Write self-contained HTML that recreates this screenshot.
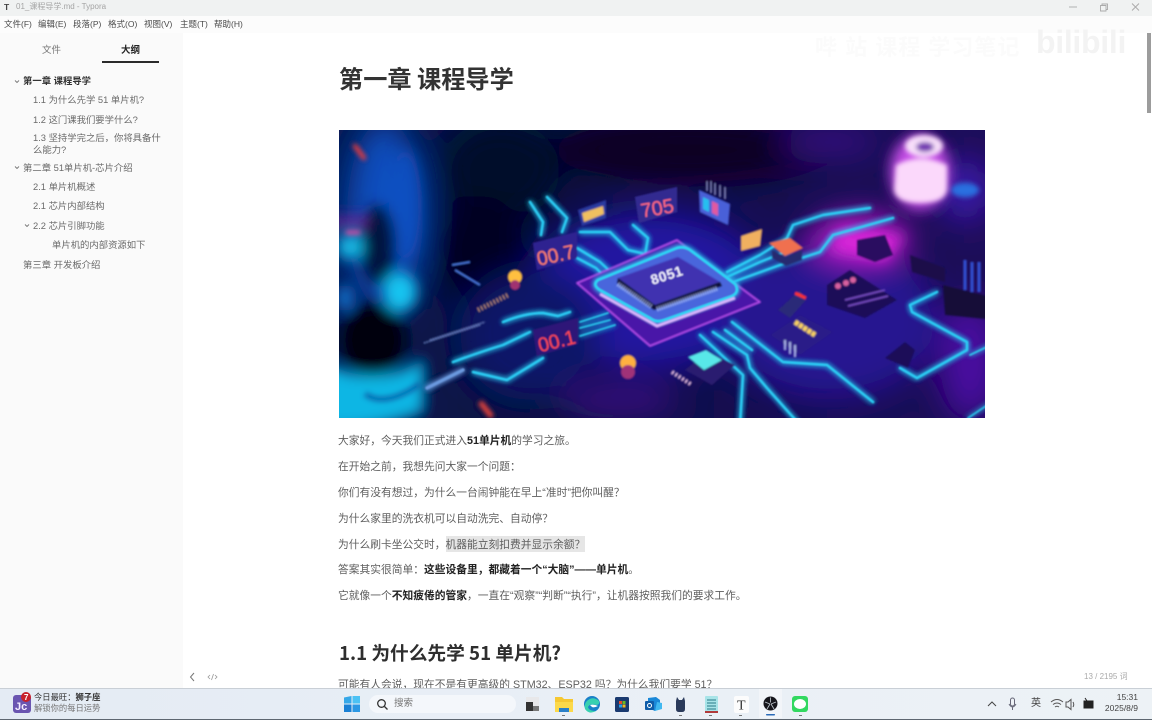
<!DOCTYPE html>
<html lang="zh-CN"><head><meta charset="utf-8"><title>01_课程导学.md - Typora</title>
<style>
html,body{margin:0;padding:0;width:1152px;height:720px;overflow:hidden;background:#fff}
body{position:relative;font-family:"Liberation Sans","Noto Sans CJK SC",sans-serif;color:#555}
.t{position:absolute;white-space:nowrap;line-height:1;filter:blur(.35px)}
.a{position:absolute}
b{color:#222;font-weight:700}
.p{left:338px;font-size:10.75px;color:#5e5e5e}
.s{font-size:9.35px;color:#6a6a6a}
.m{top:20px;font-size:8.5px;color:#4a4a4a}
</style></head><body>

<div class="a" style="left:0;top:0;width:1152px;height:16px;background:#f0f2f2"></div>
<div class="a" style="left:0;top:16px;width:183px;height:672px;background:#fafafa"></div>
<div class="a" style="left:0;top:16px;width:1152px;height:17px;background:#fcfcfc"></div>

<div class="t" style="left:4px;top:3px;font-size:8.5px;font-weight:700;color:#444">T</div>
<div class="t" style="left:16px;top:3px;font-size:8px;color:#a4a4a4">01_课程导学.md - Typora</div>
<svg class="a" style="left:1060px;top:0" width="92" height="16" viewBox="0 0 92 16" fill="none" stroke="#aaa" stroke-width=".9">
<path d="M9 7h8"/><path d="M40.500 5.500h5.500v5.500h-5.500z"/><path d="M42 5.500v-1.500h5.500v5.500h-1.500"/><path d="M72 3.500l7 7M79 3.500l-7 7"/></svg>

<div class="t m" style="left:4px">文件(F)</div>
<div class="t m" style="left:38px">编辑(E)</div>
<div class="t m" style="left:73px">段落(P)</div>
<div class="t m" style="left:108px">格式(O)</div>
<div class="t m" style="left:144px">视图(V)</div>
<div class="t m" style="left:180px">主题(T)</div>
<div class="t m" style="left:214px">帮助(H)</div>

<div class="t" style="left:42px;top:46px;font-size:9.5px;color:#777">文件</div>
<div class="t" style="left:121px;top:46px;font-size:9.5px;color:#222;font-weight:700">大纲</div>
<div class="a" style="left:102px;top:61px;width:57px;height:2px;background:#2a2a2a"></div>

<svg class="a" style="left:0;top:71px" width="40" height="170" fill="none" stroke="#777" stroke-width=".9">
<path d="M15 9.500l2 2 2-2M15 95.500l2 2 2-2M25 153.500l2 2 2-2"/></svg>
<div class="t s" style="left:23px;top:77px;color:#333;font-weight:700">第一章 课程导学</div>
<div class="t s" style="left:33px;top:96px">1.1 为什么先学 51 单片机?</div>
<div class="t s" style="left:33px;top:116px">1.2 这门课我们要学什么?</div>
<div class="t s" style="left:33px;top:134px">1.3 坚持学完之后，你将具备什</div>
<div class="t s" style="left:33px;top:146px">么能力?</div>
<div class="t s" style="left:23px;top:164px">第二章 51单片机-芯片介绍</div>
<div class="t s" style="left:33px;top:183px">2.1 单片机概述</div>
<div class="t s" style="left:33px;top:202px">2.1 芯片内部结构</div>
<div class="t s" style="left:33px;top:222px">2.2 芯片引脚功能</div>
<div class="t s" style="left:52px;top:241px">单片机的内部资源如下</div>
<div class="t s" style="left:23px;top:261px">第三章 开发板介绍</div>

<div class="a" style="left:1147px;top:33px;width:4px;height:80px;background:#9c9c9c"></div>

<div class="t" style="left:815px;top:37px;font-size:22px;letter-spacing:1px;color:#fbfbfb;font-weight:700">哔 站 课程 学习笔记</div>
<div class="t" style="left:1036px;top:26px;font-size:32px;font-weight:700;color:#f3f3f3;letter-spacing:-.3px">bilibili</div>

<div class="t" style="left:339px;top:66px;font-size:24.2px;font-weight:700;color:#333;font-family:'Noto Sans CJK SC',sans-serif">第一章 课程导学</div>

<svg class="a" style="left:339px;top:130px" width="646" height="288" viewBox="339 130 646 288">
<defs>
<linearGradient id="bg" x1="0" x2="1" y1="0" y2="0"><stop offset="0" stop-color="#071a55"/><stop offset=".3" stop-color="#08103f"/><stop offset=".6" stop-color="#120a50"/><stop offset="1" stop-color="#1e0a5a"/></linearGradient>
<filter id="all" x="0" y="0" width="100%" height="100%"><feGaussianBlur stdDeviation=".75"/></filter>
<filter id="b20" x="-60%" y="-60%" width="220%" height="220%"><feGaussianBlur stdDeviation="16"/></filter>
<filter id="b8" x="-60%" y="-60%" width="220%" height="220%"><feGaussianBlur stdDeviation="7"/></filter>
<filter id="b3" x="-50%" y="-50%" width="200%" height="200%"><feGaussianBlur stdDeviation="2.500"/></filter>
<filter id="b1" x="-20%" y="-20%" width="140%" height="140%"><feGaussianBlur stdDeviation=".6"/></filter>
<filter id="gl" x="-20%" y="-20%" width="140%" height="140%"><feGaussianBlur stdDeviation="2.600" result="g"/><feMerge><feMergeNode in="g"/><feMergeNode in="g"/><feMergeNode in="SourceGraphic"/></feMerge></filter>
<clipPath id="c"><rect x="339" y="130" width="646" height="288"/></clipPath>
</defs>
<g clip-path="url(#c)"><g filter="url(#all)">
<rect x="319" y="110" width="686" height="328" fill="url(#bg)"/>
<g filter="url(#b20)">
<ellipse cx="690" cy="150" rx="140" ry="32" fill="#070322"/>
<ellipse cx="500" cy="170" rx="60" ry="50" fill="#060a2a"/>
<ellipse cx="480" cy="250" rx="45" ry="55" fill="#050622"/>
<ellipse cx="650" cy="290" rx="120" ry="80" fill="#2318a0"/>
<ellipse cx="530" cy="335" rx="70" ry="65" fill="#0d1668"/>
<ellipse cx="830" cy="320" rx="110" ry="80" fill="#251390"/>
<ellipse cx="860" cy="238" rx="50" ry="24" fill="#b01cc8"/>
<ellipse cx="970" cy="360" rx="30" ry="60" fill="#4a10a0"/>
<ellipse cx="965" cy="190" rx="28" ry="32" fill="#3a1aa8"/>
<ellipse cx="620" cy="400" rx="60" ry="18" fill="#38107c"/>
<ellipse cx="830" cy="142" rx="50" ry="12" fill="#3c1288"/>
<ellipse cx="385" cy="215" rx="38" ry="95" fill="#0c50c0"/>
</g>
<g filter="url(#b8)">
<ellipse cx="405" cy="205" rx="16" ry="55" fill="#0d52c4" opacity=".8"/>
<ellipse cx="378" cy="245" rx="18" ry="40" fill="#041240"/>
<ellipse cx="373" cy="340" rx="32" ry="36" fill="#01030f"/>
<path d="M320 360Q375 392 424 358L424 412Q380 430 320 430Z" fill="#10b6e4"/>
<ellipse cx="400" cy="292" rx="17" ry="20" fill="#12c4f0"/>
<ellipse cx="350" cy="247" rx="13" ry="12" fill="#12c0e8"/>
<ellipse cx="345" cy="298" rx="7" ry="13" fill="#1280e0"/>
<rect x="330" y="217" width="35" height="10" fill="#8a2098" opacity=".8"/>
<ellipse cx="920" cy="172" rx="30" ry="38" fill="#c850e8"/>
<path d="M840 228L905 235L885 262L830 250Z" fill="#d828d8"/>
</g>
<g filter="url(#b3)">
<path d="M365 394Q385 408 420 384" stroke="#0a4a98" stroke-width="6" fill="none" opacity=".6"/>
<path d="M896 165Q920 152 947 165L947 190Q945 203 920 203Q896 203 894 190Z" fill="#fbd8fb"/>
<ellipse cx="924" cy="146" rx="19" ry="11" fill="#f8e0fa"/>
<ellipse cx="925" cy="147" rx="9" ry="5" fill="#7030b0"/>
<ellipse cx="965" cy="190" rx="14" ry="7" fill="#2a70e0"/>
<path d="M355 146l9 12" stroke="#ff3a30" stroke-width="4" stroke-linecap="round"/>
<path d="M480 402l12 15" stroke="#ff4a3a" stroke-width="5"/>
<rect x="346" y="231" width="14" height="3" fill="#ff40a0"/>
</g>

<g fill="none" stroke="#2ccdf6" stroke-width="2.200" filter="url(#gl)" stroke-linejoin="round" stroke-linecap="round">
<path d="M530 202L543 222L541 235"/><path d="M547 197L567 218L562 232"/>
<path d="M577 248L600 262L615 276"/><path d="M577 258L596 268L610 282"/>
<path d="M580 232L610 232L628 250L650 255"/><path d="M633 225L648 238L645 255"/>
<path d="M453 362Q480 352 503 345L530 332"/><path d="M503 322Q525 313 543 313L558 316L570 312"/>
<path d="M580 322L608 313M580 328L610 320M580 336L615 325" stroke-width="1.300"/>
<path d="M473 372L507 380L543 358"/><path d="M427 388L463 370" stroke="#6a9ae0" stroke-width="3"/>
<path d="M727 272L760 255L787 238L793 225L823 215L870 208"/>
<path d="M733 282L780 265L820 252L833 235L893 218"/>
<path d="M725 278L760 262L790 250"/>
<path d="M732 322L783 362L827 365L873 402"/>
<path d="M713 332L747 355L750 368L767 388L800 425"/>
<path d="M700 335L743 375L740 425"/>
<path d="M725 330L752 350"/>
<path d="M910 305L937 292M910 305L912 312L967 342L967 350L917 378L900 368"/>
<path d="M970 355L995 343M968 418L995 400" stroke-width="1.300"/>
</g>

<!-- chip -->
<path d="M577 283L677 240L760 302L650 346Z" fill="#4a14a8" stroke="#c050f0" stroke-width="1.500" filter="url(#b1)" stroke-linejoin="round"/>
<path d="M598 280L677 248Q684 246 690 250L735 284Q740 292 732 296L664 320Q656 323 650 318L600 290Q592 285 598 280Z" fill="#4a66dc" stroke="#2cd6f6" stroke-width="2.500" filter="url(#gl)"/>
<path d="M600 294L650 322L657 326L735 298" fill="none" stroke="#e0b8ff" stroke-width="3" filter="url(#b1)"/>
<path d="M618 278L678 257L720 282L655 305Z" fill="#4030b0" filter="url(#b1)"/>
<path d="M618 278L655 305L720 282L722 286L654 310L617 283Z" fill="#0c0c38" filter="url(#b1)"/>
<path d="M618 284L652 307M657 309L718 288" stroke="#c0d4ff" stroke-width="5" stroke-dasharray="1 1.300" fill="none" filter="url(#b1)"/>
<text x="667" y="280" text-anchor="middle" transform="rotate(-18 667 276)" font-family="Liberation Sans" font-weight="700" font-size="14" fill="#f2f0ff" letter-spacing=".5">8051</text>

<!-- displays -->
<path d="M533 243L577 232L577 258L537 270Z" fill="#2f2390"/>
<text x="555" y="262" text-anchor="middle" transform="rotate(-12 555 252)" font-family="Liberation Sans" font-size="20" fill="#ff8068" textLength="38" lengthAdjust="spacingAndGlyphs">00.7</text>
<path d="M533 330L578 318L578 344L537 356Z" fill="#2e1878"/>
<text x="556" y="348" text-anchor="middle" transform="rotate(-14 556 338)" font-family="Liberation Sans" font-size="20" fill="#ff4a50" textLength="38" lengthAdjust="spacingAndGlyphs">00.1</text>
<path d="M635 197L677 187L677 212L639 223Z" fill="#332a90"/>
<text x="657" y="215" text-anchor="middle" transform="rotate(-10 657 207)" font-family="Liberation Sans" font-size="20" fill="#ff6a80">705</text>
<g filter="url(#b1)">
<path d="M578 210L606 200L606 218L582 226Z" fill="#2b3aa0"/>
<path d="M582 213L603 206L604 214L584 222Z" fill="#f0c060"/>
<path d="M699 190L730 204L728 225L700 212Z" fill="#4a60d8"/>
<path d="M703 197L709 200L709 212L703 209Z" fill="#28c0f0"/>
<path d="M712 201L718 204L718 216L712 213Z" fill="#e05aa0"/>
<path d="M707 181v10M711 181v12M715 183v12M720 185v12M725 187v12" stroke="#b8c0f0" stroke-width="1"/>
<path d="M741 236L762 229L760 246L741 251Z" fill="#f0b060"/>
<path d="M769 243L790 238L803 248L785 256Z" fill="#f07050"/>
<path d="M772 250L786 257L802 250L802 260L786 266L772 258Z" fill="#252a70"/>
<circle cx="515" cy="277" r="7" fill="#ffc040"/><circle cx="515" cy="285" r="5" fill="#a03070"/>
<circle cx="628" cy="363" r="8" fill="#ffb040"/><circle cx="628" cy="372" r="7" fill="#a03078"/>
<path d="M478 310L508 295" stroke="#c89070" stroke-width="5" stroke-dasharray="1.500 2" fill="none"/>
<path d="M455 270L480 285M452 265L470 262" stroke="#4a7ae0" stroke-width="2" fill="none"/>
<path d="M424 343L480 325M430 340L485 322" stroke="#7a90d0" stroke-width="1.500" stroke-dasharray="1.500 1" fill="none"/>
<path d="M685 370L708 352L735 365L712 385Z" fill="#2a1a70"/>
<path d="M688 357L706 350L722 360L704 370Z" fill="#58e8e8"/>
<path d="M672 372L692 385" stroke="#e8c0e0" stroke-width="4" stroke-dasharray="2 2"/>
<path d="M770 335L800 315L833 332L800 355Z" fill="#2a1c88"/>
<path d="M795 322L815 335" stroke="#f8d060" stroke-width="5" stroke-dasharray="4 1"/>
<path d="M785 340v10M790 342v12M795 345v12" stroke="#a8b0e8" stroke-width="2"/>
<path d="M778 310L800 290L806 300L790 318Z" fill="#2c2a78"/><path d="M795 293L806 298" stroke="#ff3030" stroke-width="3"/>
<path d="M827 285L850 270L897 300L865 318L827 305Z" fill="#1d0d58"/>
<path d="M845 300L885 290M848 306L888 296" stroke="#7a50c8" stroke-width="1.500"/>
<circle cx="838" cy="286" r="3" fill="#d860a0"/><circle cx="846" cy="283" r="3" fill="#d860a0"/><circle cx="853" cy="280" r="3" fill="#d860a0"/>
<path d="M857 240L885 235L893 255L875 262L857 255Z" fill="#2a0e60"/>
<path d="M910 255L945 268L945 282L912 272Z" fill="#1a0a48"/>
<path d="M943 285L995 298V320L945 315Z" fill="#140838"/>
<path d="M965 260v30M972 262v30M979 262v30" stroke="#3050d0" stroke-width="3"/>
<path d="M885 358L905 342L915 350L908 368Z" fill="#1a0c58"/>
</g>
</g></g></svg>

<div class="t p" style="top:436px">大家好，今天我们正式进入<b>51单片机</b>的学习之旅。</div>
<div class="t p" style="top:462px">在开始之前，我想先问大家一个问题：</div>
<div class="t p" style="top:488px">你们有没有想过，为什么一台闹钟能在早上“准时”把你叫醒？</div>
<div class="t p" style="top:514px">为什么家里的洗衣机可以自动洗完、自动停？</div>
<div class="a" style="left:446px;top:536px;width:139px;height:16px;background:#e6e6e6"></div>
<div class="t p" style="top:540px">为什么刷卡坐公交时，机器能立刻扣费并显示余额？</div>
<div class="t p" style="top:565px">答案其实很简单：<b>这些设备里，都藏着一个“大脑”——单片机</b>。</div>
<div class="t p" style="top:591px">它就像一个<b>不知疲倦的管家</b>，一直在“观察”“判断”“执行”，让机器按照我们的要求工作。</div>

<div class="t" style="left:339px;top:644px;font-size:18.7px;font-weight:700;color:#2e2e2e;font-family:'Noto Sans CJK SC',sans-serif">1.1 为什么先学 51 单片机?</div>
<div class="t p" style="top:680px">可能有人会说，现在不是有更高级的 STM32、ESP32 吗？为什么我们要学 51？</div>

<svg class="a" style="left:186px;top:671px" width="36" height="12" fill="none" stroke="#777" stroke-width="1">
<path d="M8 2l-3.500 4 3.500 4"/><path d="M24 4l-2 2 2 2M29 4l2 2-2 2M27.500 3l-2 6" stroke="#999" stroke-width=".8"/></svg>
<div class="t" style="left:1084px;top:673px;font-size:8px;color:#aaa">13 / 2195 词</div>

<div class="a" style="left:0;top:688px;width:1152px;height:32px;background:linear-gradient(90deg,#e4ebf4,#e9eff6 50%,#edf2f6);border-top:1px solid #c9cfd6;box-sizing:border-box;border-bottom:1px solid #5d6670"></div>

<svg class="a" style="left:11px;top:691px" width="22" height="24"><rect x="2" y="4" width="18" height="18" rx="3" fill="#6a55b0"/><text x="4" y="19" font-family="Liberation Sans" font-size="11" font-weight="700" fill="#f4ecff">Jc</text><circle cx="15" cy="6" r="5" fill="#c8202a"/><text x="13" y="9" font-family="Liberation Sans" font-size="8" font-weight="700" fill="#fff">7</text></svg>
<div class="t" style="left:34px;top:693px;font-size:8.3px;color:#333">今日最旺：<b style="color:#333">狮子座</b></div>
<div class="t" style="left:34px;top:704px;font-size:8.3px;color:#777">解锁你的每日运势</div>

<svg class="a" style="left:344px;top:696px" width="16" height="16"><path d="M0 1.500L7.500 0v7.500H0z" fill="#36a8e8"/><path d="M8.500 0L16 0v7.500H8.500z" fill="#4cc2f4"/><path d="M0 8.500h7.500V16H0z" fill="#1a80d4"/><path d="M8.500 8.500H16V16H8.500z" fill="#2c98e4"/></svg>
<div class="a" style="left:369px;top:695px;width:147px;height:18px;border-radius:9px;background:#f4f7fb"></div>
<svg class="a" style="left:376px;top:698px" width="13" height="13" fill="none" stroke="#333" stroke-width="1.300"><circle cx="5.500" cy="5.500" r="3.800"/><path d="M8.500 8.500l3 3"/></svg>
<div class="t" style="left:394px;top:699px;font-size:9.5px;color:#777">搜索</div>

<div class="a" style="left:759px;top:689px;width:23px;height:29px;background:#f2f5f9"></div>
<svg class="a" style="left:524px;top:694px" width="290" height="24">
<path d="M2 3h13v14H2z" fill="#e8e8ea"/><path d="M2 8h7v9H2z" fill="#333"/><path d="M9 12h6v5H9z" fill="#777"/>
<path d="M31 3h7l2 2h9v8H31z" fill="#f6c832"/><path d="M31 8h18v10H31z" fill="#fcd94a"/><path d="M35 14h10v4H35z" fill="#2a80c8"/><rect x="38" y="21" width="3" height="1" fill="#777"/>
<circle cx="68" cy="10" r="8" fill="#1a80c8"/><path d="M62 8Q68 1 75 7Q76 11 72 11Q66 9 64 13Q65 17 72 17Q65 21 61 15Q60 11 62 8Z" fill="#38d0b0"/><path d="M66 11Q70 10 74 12Q70 14 68 13Z" fill="#fff"/>
<rect x="91" y="3" width="14" height="15" rx="1.500" fill="#1a3a70"/><rect x="95" y="7" width="3" height="3" fill="#e84a2a"/><rect x="98.500" y="7" width="3" height="3" fill="#6ab820"/><rect x="95" y="10.500" width="3" height="3" fill="#28a0e8"/><rect x="98.500" y="10.500" width="3" height="3" fill="#f4b820"/>
<path d="M124 4l8-1 4 3v8l-5 3-7-3z" fill="#1a88d8"/><rect x="121" y="7" width="9" height="9" rx="1" fill="#0f5ca8"/><circle cx="125.500" cy="11.500" r="2" fill="none" stroke="#fff"/><path d="M133 8l5 1v6l-7 2z" fill="#40b8f0"/>
<path d="M152 7l1-4 2 3h3l2-3 1 4v8q0 3-3 3h-3q-3 0-3-3z" fill="#2a3a5a"/><rect x="155" y="21" width="3" height="1" fill="#777"/>
<rect x="181" y="2" width="13" height="17" rx="1" fill="#a8e4e8"/><path d="M183 6h9M183 9h9M183 12h9M183 15h9" stroke="#2a7a88" stroke-width="1"/><rect x="181" y="17" width="13" height="2" fill="#b03a3a"/><rect x="185" y="21" width="3" height="1" fill="#777"/>
<rect x="210" y="2" width="15" height="17" rx="2" fill="#fcfcfc"/>
<text x="213" y="15.500" font-family="Liberation Serif" font-size="14" fill="#333">T</text><rect x="215" y="21" width="3" height="1" fill="#777"/>
<rect x="268" y="2" width="16" height="16" rx="3" fill="#32d860"/><ellipse cx="276" cy="10" rx="6" ry="5" fill="#fff"/><rect x="275" y="21" width="3" height="1" fill="#777"/>
</svg>
<svg class="a" style="left:763px;top:696px" width="15" height="20"><circle cx="7.500" cy="7.500" r="7" fill="#16161c"/><path d="M7.500 1.500v5M2 6l5 2M4 13l3-5M11 13l-3-5M13 6l-5 2" stroke="#b8c0c8" stroke-width=".9"/><rect x="3" y="18" width="9" height="1.500" rx=".7" fill="#2a6ab8"/></svg>

<svg class="a" style="left:986px;top:694px" width="110" height="20" fill="none" stroke="#444" stroke-width="1">
<path d="M2 12l4-4 4 4"/>
<rect x="24.500" y="4" width="4" height="8" rx="2" fill="#eef2f6" stroke="#667"/><path d="M23 10q3.500 6 7 0M26.500 13v3" stroke="#667"/>
<path d="M65 8q6-5 12 0M67 10.500q4-3 8 0M69 13q2-1.500 4 0" stroke="#555"/>
<path d="M80 8h2l3-2.500v10l-3-2.500h-2zM87 8q1.500 2.500 0 5" stroke="#555"/>
<path d="M98 7h9v7h-9z" fill="#222" stroke="#222"/><path d="M99 4l2 3" stroke="#222"/>
</svg>
<div class="t" style="left:1031px;top:699px;font-size:10px;color:#444">英</div>
<div class="t" style="right:14px;top:693px;font-size:8.5px;color:#444">15:31</div>
<div class="t" style="right:14px;top:704px;font-size:8.5px;color:#444">2025/8/9</div>
</body></html>
